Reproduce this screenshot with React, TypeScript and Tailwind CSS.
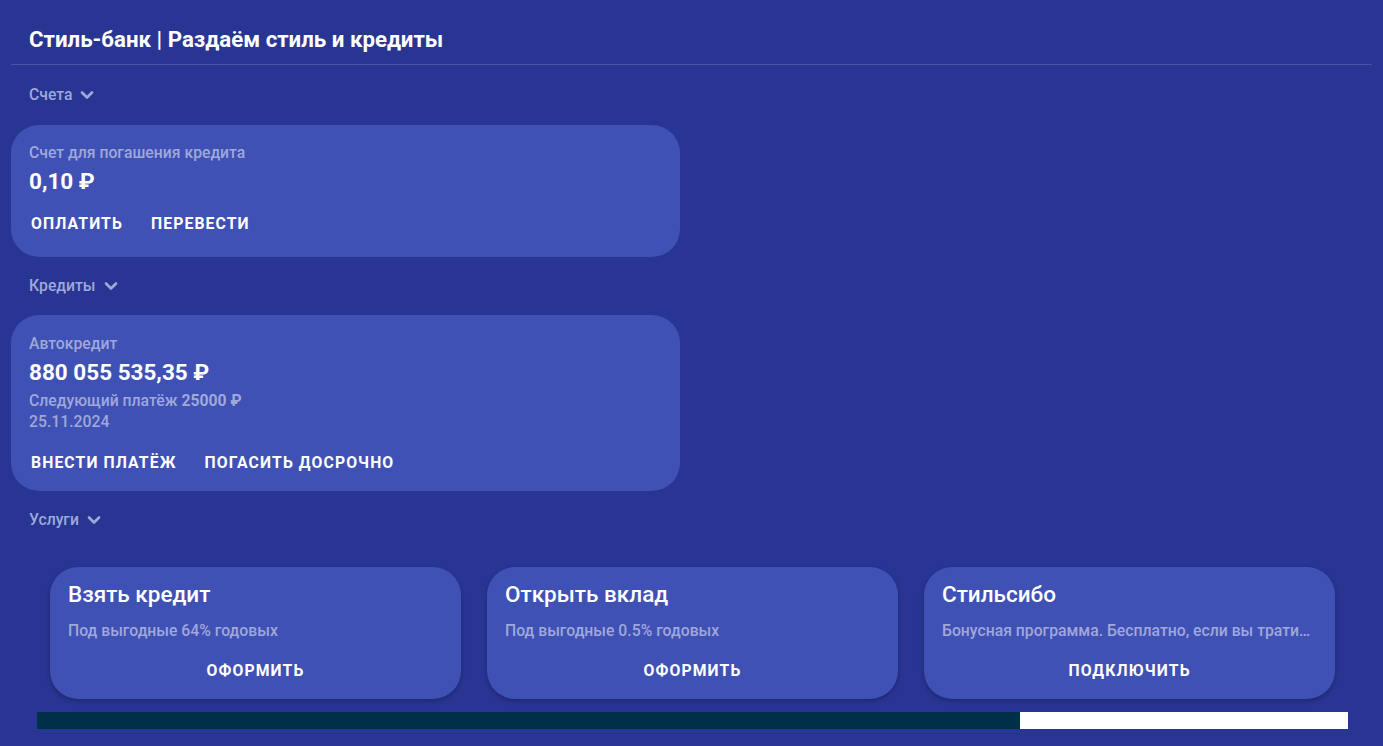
import { ChevronDown } from "lucide-react";

function Section({ title }: { title: string }) {
  return (
    <div className="flex items-center gap-[5px] pl-[18px] h-[30px] text-[15.75px] font-medium text-[#9fa8da]">
      {title}
      <ChevronDown size={20} strokeWidth={3.2} />
    </div>
  );
}

function ActionBtn({ children }: { children: React.ReactNode }) {
  return (
    <button className="px-[14px] h-[36px] text-[15.75px] font-bold tracking-[0.07em] uppercase text-white">
      {children}
    </button>
  );
}

function Service({ title, text, action }: { title: string; text: string; action: string }) {
  return (
    <div className="w-[411px] h-[132px] rounded-[28px] bg-[#3f51b5] shadow-[0_2px_4px_rgba(0,0,0,0.25)] px-[18px] pt-[12px] flex flex-col">
      <div className="text-[22.5px] font-medium text-white leading-[30px]">{title}</div>
      <div className="mt-[11px] text-[15.75px] font-medium text-[#9fa8da] truncate leading-[22px]">{text}</div>
      <div className="mt-[18px] text-center text-[15.75px] font-bold tracking-[0.07em] text-white leading-[22px]">
        {action}
      </div>
    </div>
  );
}

export default function App() {
  return (
    <div className="min-h-[746px] bg-[#283593] font-['Roboto',sans-serif] px-[11px]">
      <header className="h-[65px] flex items-end pb-[10px] pl-[18px] border-b border-[#4654a8]">
        <h1 className="text-[22.25px] font-bold text-white leading-[30px]">Стиль-банк | Раздаём стиль и кредиты</h1>
      </header>

      <div className="pt-[15px]">
        <Section title="Счета" />
      </div>
      <div className="mt-[15px] w-[669px] h-[132px] rounded-[28px] bg-[#3f51b5] pt-[17px]">
        <div className="pl-[18px] text-[15.75px] font-medium text-[#9fa8da] leading-[22px]">Счет для погашения кредита</div>
        <div className="pl-[18px] mt-[2px] text-[22.5px] font-bold text-white leading-[30px]">0,10 ₽</div>
        <div className="mt-[10px] pl-[6px] flex">
          <ActionBtn>Оплатить</ActionBtn>
          <ActionBtn>Перевести</ActionBtn>
        </div>
      </div>

      <div className="pt-[14px]">
        <Section title="Кредиты" />
      </div>
      <div className="mt-[14px] w-[669px] h-[176px] rounded-[28px] bg-[#3f51b5] pt-[18px]">
        <div className="pl-[18px] text-[15.75px] font-medium text-[#9fa8da] leading-[22px]">Автокредит</div>
        <div className="pl-[18px] mt-[2px] text-[22.5px] font-bold text-white leading-[30px]">880 055 535,35 ₽</div>
        <div className="pl-[18px] mt-[4px] text-[15.75px] font-medium text-[#9fa8da] leading-[20px]">
          Следующий платёж <span className="font-bold">25000 ₽</span>
        </div>
        <div className="pl-[18px] mt-[1px] text-[15.75px] font-medium text-[#9fa8da] leading-[20px]">25.11.2024</div>
        <div className="mt-[13px] pl-[6px] flex">
          <ActionBtn>Внести платёж</ActionBtn>
          <ActionBtn>Погасить досрочно</ActionBtn>
        </div>
      </div>

      <div className="pt-[14px]">
        <Section title="Услуги" />
      </div>

      <div className="mt-[32px] flex gap-[26px] pl-[39px]">
        <Service title="Взять кредит" text="Под выгодные 64% годовых" action="ОФОРМИТЬ" />
        <Service title="Открыть вклад" text="Под выгодные 0.5% годовых" action="ОФОРМИТЬ" />
        <Service
          title="Стильсибо"
          text="Бонусная программа. Бесплатно, если вы тратите больше 100 000 ₽ в месяц"
          action="ПОДКЛЮЧИТЬ"
        />
      </div>

      <div className="mt-[13px] ml-[26px] w-[1311px] h-[17px] bg-[#003049] flex justify-end">
        <div className="w-[328px] h-full bg-white" />
      </div>
    </div>
  );
}
